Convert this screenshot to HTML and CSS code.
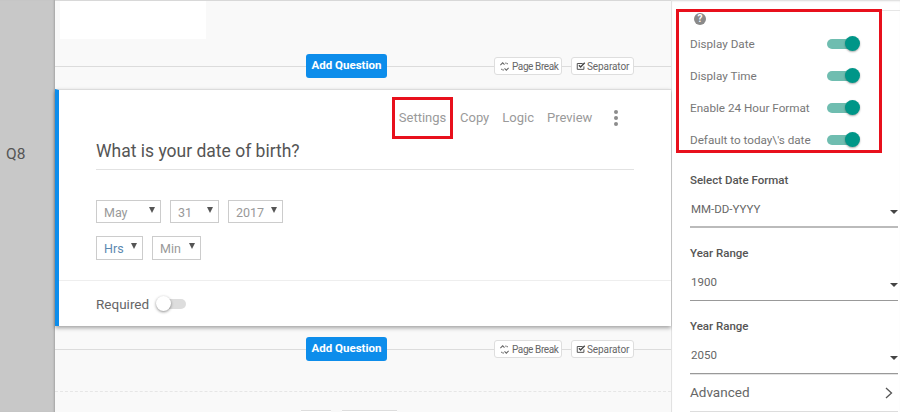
FILE: index.html
```html
<!DOCTYPE html>
<html lang="en">
<head>
<meta charset="utf-8">
<title>Survey builder</title>
<link rel="stylesheet" href="styles.css">
</head>
<body>
<div class="app">
  <aside class="rail"><span class="qnum">Q8</span></aside>
  <main class="main">
    <section class="prev">
      <div class="blank"></div>
      <div class="addrow">
        <span class="seg seg-a"></span>
        <button class="add">Add Question</button>
        <span class="seg seg-b"></span>
        <span class="chip chip-pb"><svg class="ci" viewBox="0 0 12 12"><path d="M1.5 4.5 L4 2 L6 4 M10.5 7.5 L8 10 L6 8 M7.5 1.5v1.5M9.5 2.5 l-1 1M4.5 10.5V9M2.5 9.5l1-1" fill="none" stroke="#666" stroke-width="1.1"/></svg>Page Break</span>
        <span class="seg seg-c"></span>
        <span class="chip chip-sp"><svg class="ci" viewBox="0 0 12 12"><path d="M9.5 6.5V10H1.5V3H8" fill="none" stroke="#555" stroke-width="1.2"/><path d="M3.5 5.2 L5.5 7.3 L10.5 2.2" fill="none" stroke="#444" stroke-width="1.6"/></svg>Separator</span>
        <span class="seg seg-d"></span>
      </div>
    </section>

    <section class="card">
      <nav class="tabs">
        <a class="tab tab-on">Settings</a>
        <a class="tab">Copy</a>
        <a class="tab">Logic</a>
        <a class="tab">Preview</a>
        <span class="kebab"><i></i><i></i><i></i></span>
      </nav>
      <h2 class="q">What is your date of birth?</h2>
      <div class="selrow">
        <span class="sel w65">May</span>
        <span class="sel w49">31</span>
        <span class="sel w55">2017</span>
      </div>
      <div class="selrow selrow2">
        <span class="sel w47 blue">Hrs</span>
        <span class="sel w49">Min</span>
      </div>
      <div class="foot">
        <span class="req">Required</span>
        <span class="tog off"></span>
      </div>
    </section>

    <section class="next">
      <div class="addrow">
        <span class="seg seg-a"></span>
        <button class="add">Add Question</button>
        <span class="seg seg-b"></span>
        <span class="chip chip-pb"><svg class="ci" viewBox="0 0 12 12"><path d="M1.5 4.5 L4 2 L6 4 M10.5 7.5 L8 10 L6 8 M7.5 1.5v1.5M9.5 2.5 l-1 1M4.5 10.5V9M2.5 9.5l1-1" fill="none" stroke="#666" stroke-width="1.1"/></svg>Page Break</span>
        <span class="seg seg-c"></span>
        <span class="chip chip-sp"><svg class="ci" viewBox="0 0 12 12"><path d="M9.5 6.5V10H1.5V3H8" fill="none" stroke="#555" stroke-width="1.2"/><path d="M3.5 5.2 L5.5 7.3 L10.5 2.2" fill="none" stroke="#444" stroke-width="1.6"/></svg>Separator</span>
        <span class="seg seg-d"></span>
      </div>
      <div class="dots"></div>
      <div class="peek"><span class="pk pk1"></span><span class="pk pk2"></span></div>
    </section>
  </main>

  <aside class="panel">
    <div class="box">
      <span class="help">?</span>
      <div class="optrow"><span>Display Date</span><span class="tog on"></span></div>
      <div class="optrow"><span>Display Time</span><span class="tog on"></span></div>
      <div class="optrow"><span>Enable 24 Hour Format</span><span class="tog on"></span></div>
      <div class="optrow"><span>Default to today\'s date</span><span class="tog on"></span></div>
    </div>
    <div class="field f1">
      <label class="flabel">Select Date Format</label>
      <div class="drop thick">MM-DD-YYYY</div>
    </div>
    <div class="field">
      <label class="flabel">Year Range</label>
      <div class="drop">1900</div>
    </div>
    <div class="field last">
      <label class="flabel">Year Range</label>
      <div class="drop">2050</div>
    </div>
    <div class="adv"><span class="advt">Advanced</span><svg class="chev" viewBox="0 0 8 12"><path d="M1 1 L6.5 6 L1 11" fill="none" stroke="#555" stroke-width="1.3"/></svg></div>
  </aside>
</div>
</body>
</html>
```

FILE: styles.css
```css
* { box-sizing: border-box; }
html, body { margin: 0; padding: 0; height: 412px; overflow: hidden; background: #fff; }
body { font-family: Roboto, "Noto Sans", sans-serif; color: #666; }

.app { display: grid; grid-template-columns: 55px 617px 228px; height: 412px; overflow: hidden; }

.rail { background: #c8c8c8; box-shadow: inset -2px 0 2px -1px #a5a5a5; padding: 144px 0 0 6px; font-size: 15.5px; color: #555; }
.qnum { display: block; line-height: 20px; }

.main { background: #f9f9f9; display: flex; flex-direction: column; height: 412px; border-right: 1px solid #e2e2e2; }

.prev { height: 89px; border-top: 1px solid #d8d8d8; }
.blank { width: 146px; height: 38px; background: #fff; margin-left: 5px; }
.addrow { display: flex; align-items: center; height: 24px; }
.prev .addrow { margin-top: 15px; }
.seg { height: 1px; background: #dcdcdc; display: block; flex: none; }
.seg-a { width: 251px; }
.seg-b { width: 107px; }
.seg-c { width: 9px; }
.seg-d { flex: 1; }

.add { flex: none; width: 81px; height: 24px; border: 0; border-radius: 3px; background: #0d8deb; color: #fff; font: 700 11.5px/22px Roboto, sans-serif; padding: 0 0 2px; }
.chip { flex: none; display: inline-flex; align-items: center; height: 18px; padding: 0 0 0 4px; background: #fff; border: 1px solid #dedede; border-radius: 3px; font-size: 10px; color: #666; white-space: nowrap; }
.chip-pb { width: 68px; gap: 2px; letter-spacing: -0.4px; }
.chip-sp { width: 63px; gap: 1px; letter-spacing: -0.1px; }
.ci { width: 10px; height: 10px; flex: none; }
.chip-pb .ci { width: 11px; height: 11px; }

.card { height: 237px; background: #fff; border-left: 4px solid #0d8deb; border-top: 1px solid #dcdcdc; box-shadow: 0 2px 4px rgba(0,0,0,.35); padding-top: 7px; }
.tabs { display: flex; align-items: center; padding-left: 333px; height: 42px; }
.tab { font-size: 13px; color: #9a9a9a; margin-right: 13px; line-height: 42px; white-space: nowrap; }
.tab-on { border: 3px solid #e8101c; width: 61px; height: 42px; line-height: 36px; text-align: center; margin-right: 7px; }
.kebab { display: flex; flex-direction: column; gap: 2px; margin-left: 9px; }
.kebab i { display: block; width: 4px; height: 4px; border-radius: 50%; background: #8c8c8c; }

.q { margin: 0 0 0 37px; width: 538px; height: 31px; border-bottom: 1px solid #e2e2e2; font-weight: 400; font-size: 17.5px; line-height: 24px; color: #555; }

.selrow { display: flex; gap: 9px; padding-left: 37px; margin-top: 30px; }
.selrow2 { margin-top: 13px; }
.sel { position: relative; display: block; height: 23px; border: 1px solid #ccc; font-size: 12.5px; line-height: 23px; padding-left: 7px; color: #999; }
.sel::after { content: ""; position: absolute; right: 5px; top: 6px; border: 3px solid transparent; border-top: 6px solid #555; border-bottom: 0; }
.selrow2 .sel { height: 24px; }
.w65 { width: 65px; } .w49 { width: 49px; } .w55 { width: 55px; } .w47 { width: 47px; }
.blue { color: #5c88b0; }

.foot { margin-top: 20px; border-top: 1px solid #eee; height: 46px; display: flex; align-items: center; padding-left: 37px; gap: 5px; }
.req { font-size: 13.5px; color: #666; }

.tog { position: relative; display: block; width: 28px; height: 10px; border-radius: 5px; background: #6fbdb0; flex: none; }
.tog::after { content: ""; position: absolute; top: -3px; width: 15px; height: 15px; border-radius: 50%; background: #009688; left: 18px; box-shadow: 0 1px 2px rgba(0,0,0,.35); }
.tog.off { background: #ddd; width: 25px; margin-left: 7px; }
.tog.off::after { background: #fff; left: -5px; box-shadow: 0 1px 3px rgba(0,0,0,.45); }

.next { flex: 1; overflow: hidden; }
.next .addrow { margin-top: 11px; }
.dots { margin-top: 30px; border-top: 1px dashed #e6e6e6; }
.peek { display: flex; gap: 11px; padding-left: 246px; margin-top: 18px; }
.pk { display: block; height: 4px; background: #fff; border-top: 1px solid #ddd; }
.pk1 { width: 30px; } .pk2 { width: 55px; }

.panel { background: #fff; padding: 9px 2px 0 4px; height: 412px; box-shadow: inset 0 2px 2px -1px #d8d8d8; }
.box { width: 206px; height: 144px; border: 3px solid #e8101c; padding: 1px 0 0 11px; position: relative; }
.box::after { content: ""; position: absolute; left: 203px; top: -2px; width: 18px; height: 1px; background: #e6e6e6; }
.help { display: block; width: 12px; height: 12px; margin-left: 4px; border-radius: 50%; background: #8a8a8a; color: #fff; font: 700 10px/12px Roboto, sans-serif; text-align: center; }
.optrow { display: flex; align-items: center; justify-content: space-between; height: 32px; font-size: 11.7px; line-height: 14px; color: #777; width: 165px; }
.optrow > span:first-child { margin-top: -1px; }
.help + .optrow { margin-top: 3px; }

.field { padding-left: 14px; height: 73px; }
.f1 { margin-top: 19px; }
.last { height: 56px; }
.flabel { display: block; font-size: 11.5px; font-weight: 500; color: #555; line-height: 16px; }
.drop { position: relative; margin-top: 13px; height: 27px; border-bottom: 1px solid #999; font-size: 11.5px; line-height: 16px; color: #666; padding-left: 1px; }
.thick { border-bottom: 2px solid #bbb; }
.drop::after { content: ""; position: absolute; right: 0; top: 9px; border: 4px solid transparent; border-top: 4px solid #444; border-bottom: 0; }
.adv { margin-left: 14px; height: 38px; border-top: 1px solid #e4e4e4; border-bottom: 1px solid #ddd; display: flex; align-items: center; justify-content: space-between; font-size: 13.5px; color: #666; padding-right: 5px; }
.advt { margin-top: -3px; }
.chev { width: 8px; height: 12px; }
```
